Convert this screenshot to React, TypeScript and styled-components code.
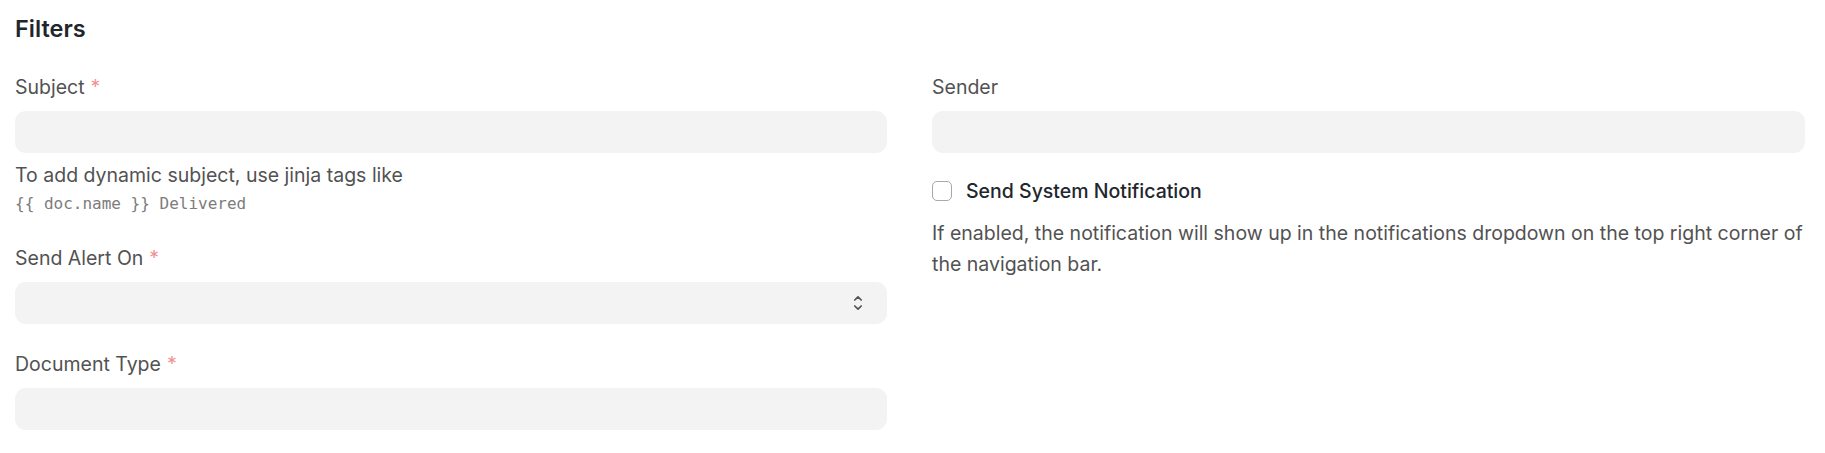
import React from "react";
import styled, { createGlobalStyle } from "styled-components";

const GlobalStyle = createGlobalStyle`
  html, body {
    margin: 0;
    padding: 0;
    background: #ffffff;
  }
  body {
    font-family: Inter, "Noto Sans", sans-serif;
    -webkit-font-smoothing: antialiased;
  }
`;

const Page = styled.div`
  box-sizing: border-box;
  width: 1825px;
  padding: 15px 20px 0 15px;
`;

const SectionTitle = styled.h2`
  margin: 0 0 34px;
  font-size: 23.5px;
  line-height: 28px;
  font-weight: 600;
  color: #1f272e;
`;

const Columns = styled.div`
  display: grid;
  grid-template-columns: 872px 873px;
  column-gap: 45px;
  align-items: start;
`;

const Column = styled.div`
  display: flex;
  flex-direction: column;
  gap: 30px;
`;

const Field = styled.div`
  display: flex;
  flex-direction: column;
`;

const Label = styled.label`
  display: block;
  margin-bottom: 14px;
  font-size: 19.5px;
  line-height: 20px;
  color: #525252;
`;

const Required = styled.span`
  margin-left: 6px;
  color: #f19191;
`;

const InputBox = styled.div`
  position: relative;
  height: 42px;
  border-radius: 11px;
  background: #f3f3f3;
`;

const SelectArrows = styled.svg`
  position: absolute;
  right: 24px;
  top: 50%;
  transform: translateY(-50%);
`;

const Help = styled.div`
  margin-top: 9px;
  color: #525252;
`;

const HelpLine = styled.div`
  font-size: 19.5px;
  line-height: 26px;
`;

const Code = styled.div`
  margin-top: 3px;
  margin-bottom: 1px;
  font-family: "DejaVu Sans Mono", "Liberation Mono", monospace;
  font-size: 16px;
  line-height: 26px;
  color: #7c7c7c;
`;

const CheckRow = styled.label`
  display: flex;
  align-items: center;
  gap: 14px;
  height: 22px;
`;

const CheckBox = styled.span`
  box-sizing: border-box;
  flex: none;
  width: 20px;
  height: 20px;
  border: 1px solid #a8a8a8;
  border-radius: 5px;
  background: #fff;
`;

const CheckLabel = styled.span`
  font-size: 19.5px;
  font-weight: 500;
  color: #1f272e;
`;

const Description = styled.p`
  margin: 16px 0 0;
  font-size: 19.5px;
  line-height: 31px;
  color: #525252;
`;

const CheckField = styled.div`
  display: flex;
  flex-direction: column;
  margin-top: -3px;
`;

export default function App() {
  return (
    <>
      <GlobalStyle />
      <Page>
        <SectionTitle>Filters</SectionTitle>
        <Columns>
          <Column>
            <Field>
              <Label>
                Subject<Required>*</Required>
              </Label>
              <InputBox />
              <Help>
                <HelpLine>To add dynamic subject, use jinja tags like</HelpLine>
                <Code>{"{{ doc.name }} Delivered"}</Code>
              </Help>
            </Field>
            <Field>
              <Label>
                Send Alert On<Required>*</Required>
              </Label>
              <InputBox>
                <SelectArrows width="10" height="18" viewBox="0 0 10 18" fill="none">
                  <path d="M1.8 6 L5 2.8 L8.2 6" stroke="#525252" strokeWidth="1.7" strokeLinecap="round" strokeLinejoin="round" />
                  <path d="M1.8 12 L5 15.2 L8.2 12" stroke="#525252" strokeWidth="1.7" strokeLinecap="round" strokeLinejoin="round" />
                </SelectArrows>
              </InputBox>
            </Field>
            <Field>
              <Label>
                Document Type<Required>*</Required>
              </Label>
              <InputBox />
            </Field>
          </Column>
          <Column>
            <Field>
              <Label>Sender</Label>
              <InputBox />
            </Field>
            <CheckField>
              <CheckRow>
                <CheckBox />
                <CheckLabel>Send System Notification</CheckLabel>
              </CheckRow>
              <Description>
                If enabled, the notification will show up in the notifications dropdown on the top right corner of the navigation bar.
              </Description>
            </CheckField>
          </Column>
        </Columns>
      </Page>
    </>
  );
}
